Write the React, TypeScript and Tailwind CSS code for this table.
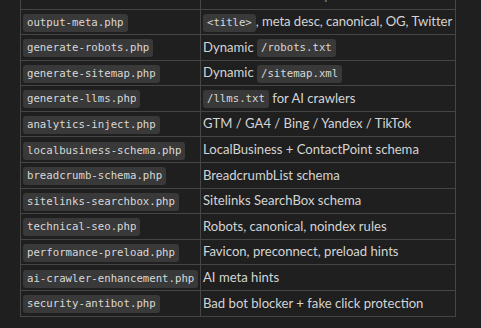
import React from "react";

const Code: React.FC<{ children: React.ReactNode }> = ({ children }) => (
  <code className="inline-block h-[18px] px-[4px] rounded-[3px] bg-[#393939] text-[#d8d8d8] text-[10.7px] leading-[18px] font-['DejaVu_Sans_Mono',monospace] align-middle">
    {children}
  </code>
);

const rows: { file: string; purpose: React.ReactNode }[] = [
  { file: "output-meta.php", purpose: <><Code>&lt;title&gt;</Code>, meta desc, canonical, OG, Twitter</> },
  { file: "generate-robots.php", purpose: <>Dynamic <Code>/robots.txt</Code></> },
  { file: "generate-sitemap.php", purpose: <>Dynamic <Code>/sitemap.xml</Code></> },
  { file: "generate-llms.php", purpose: <><Code>/llms.txt</Code> for AI crawlers</> },
  { file: "analytics-inject.php", purpose: "GTM / GA4 / Bing / Yandex / TikTok" },
  { file: "localbusiness-schema.php", purpose: "LocalBusiness + ContactPoint schema" },
  { file: "breadcrumb-schema.php", purpose: "BreadcrumbList schema" },
  { file: "sitelinks-searchbox.php", purpose: "Sitelinks SearchBox schema" },
  { file: "technical-seo.php", purpose: "Robots, canonical, noindex rules" },
  { file: "performance-preload.php", purpose: "Favicon, preconnect, preload hints" },
  { file: "ai-crawler-enhancement.php", purpose: "AI meta hints" },
  { file: "security-antibot.php", purpose: "Bad bot blocker + fake click protection" },
];

export default function App() {
  return (
    <div className="w-[481px] h-[328px] overflow-hidden bg-[#1f1f1f] text-[#d4d4d4] font-['Lato',sans-serif] text-[13.1px]">
      <table className="ml-[20px] -mt-[16px] border-collapse w-[435px] table-fixed">
        <colgroup>
          <col className="w-[180px]" />
          <col className="w-[255px]" />
        </colgroup>
        <thead>
          <tr className="h-[25px]">
            <th className="border-b border-[#454545] border-x text-[#7a7a7a] font-semibold text-center align-bottom pb-[3px]">File</th>
            <th className="border-b border-[#454545] border-x text-[#7a7a7a] font-semibold text-center align-bottom pb-[3px]">Purpose</th>
          </tr>
        </thead>
        <tbody>
          {rows.map((r, i) => (
            <tr key={r.file} className="h-[25.6px]">
              <td className="border border-[#454545] px-[2px] py-0 whitespace-nowrap">
                <Code>{r.file}</Code>
              </td>
              <td className={`border border-[#454545] px-[2px] py-0 whitespace-nowrap ${i === 0 ? "tracking-[-0.05px]" : ""}`}>{r.purpose}</td>
            </tr>
          ))}
        </tbody>
      </table>
    </div>
  );
}
